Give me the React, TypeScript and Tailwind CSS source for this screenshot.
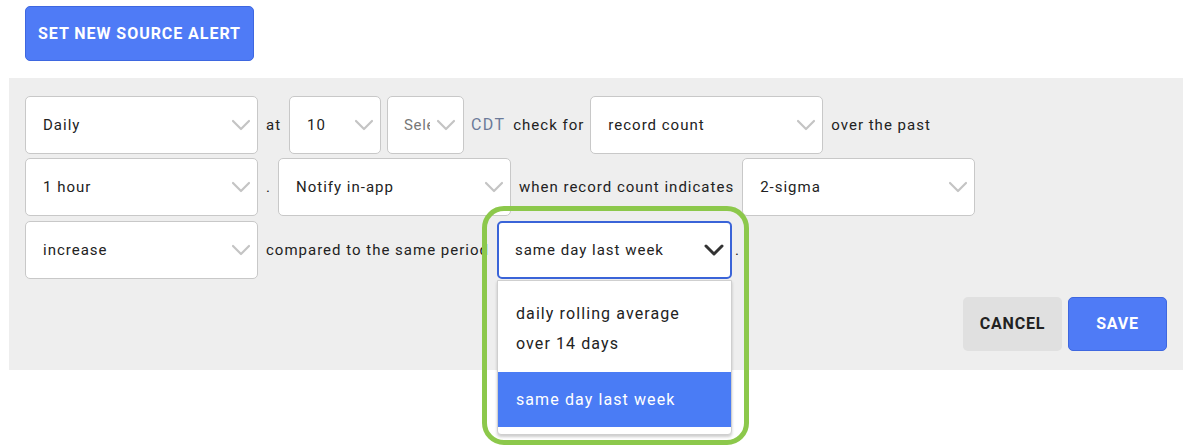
import React from "react";

const Chevron = ({ dark = false }: { dark?: boolean }) => (
  <svg
    width="20"
    height="12"
    viewBox="0 0 20 12"
    fill="none"
    className="shrink-0"
  >
    <path
      d="M2 2 L10 10 L18 2"
      stroke={dark ? "#333333" : "#c4c4c4"}
      strokeWidth={dark ? 3 : 2.2}
      strokeLinecap="round"
      strokeLinejoin="round"
    />
  </svg>
);

const Select = ({
  value,
  width,
  focused = false,
}: {
  value: string;
  width: string;
  focused?: boolean;
}) => (
  <div
    className={`${width} h-[58px] shrink-0 bg-white rounded-[5px] flex items-center justify-between overflow-hidden ${
      focused ? "border-2 border-[#3a64d8] pl-[16px] pr-[6px]" : "border border-[#c8c8c8] pl-[17px] pr-[6px]"
    }`}
  >
    <span className="text-[15px] tracking-[1px] whitespace-nowrap overflow-hidden text-[#222]">{value}</span>
    <Chevron dark={focused} />
  </div>
);

const Label = ({ children, className = "" }: { children: React.ReactNode; className?: string }) => (
  <span className={`text-[15px] tracking-[1px] text-[#222] whitespace-nowrap ${className}`}>{children}</span>
);

export default function App() {
  return (
    <div className="w-[1193px] h-[448px] bg-white relative font-['Roboto',sans-serif] overflow-hidden">
      <div className="pt-[6px] pl-[25px]">
        <button className="w-[229px] h-[55px] rounded-[5px] bg-[#4f7bf6] border border-[#3e67e0] text-white font-bold text-[16px] tracking-[0.95px]">
          SET NEW SOURCE ALERT
        </button>
      </div>

      <div className="mt-[17px] ml-[9px] w-[1174px] h-[292px] bg-[#eeeeee] pt-[18px] pl-[16px] pr-[16px] flex flex-col">
        <div className="flex items-center h-[58px]">
          <Select value="Daily" width="w-[233px]" />
          <Label className="ml-[8px] mr-[8px]">at</Label>
          <Select value="10" width="w-[92px]" />
          <div className="ml-[6px] w-[77px] h-[58px] shrink-0 bg-white rounded-[5px] border border-[#c8c8c8] flex items-center pl-[16px] pr-[5px] overflow-hidden">
            <span className="block shrink-0 text-[15px] tracking-[0.6px] text-[#777] w-[26px] overflow-hidden whitespace-nowrap">Sele</span>
            <span className="ml-[6px] flex">
              <Chevron />
            </span>
          </div>
          <span className="ml-[7px] text-[16px] tracking-[1.3px] text-[#6b7a99]">CDT</span>
          <Label className="ml-[8px] mr-[6px]">check for</Label>
          <Select value="record count" width="w-[233px]" />
          <Label className="ml-[8px]">over the past</Label>
        </div>

        <div className="flex items-center h-[58px] mt-[4px]">
          <Select value="1 hour" width="w-[233px]" />
          <Label className="ml-[8px] mr-[7px]">.</Label>
          <Select value="Notify in-app" width="w-[233px]" />
          <Label className="ml-[8px] mr-[8px]">when record count indicates</Label>
          <Select value="2-sigma" width="w-[233px]" />
        </div>

        <div className="flex items-center h-[58px] mt-[5px]">
          <Select value="increase" width="w-[233px]" />
          <Label className="ml-[8px] mr-[8px]">compared to the same period</Label>
          <div className="relative">
            <Select value="same day last week" width="w-[235px]" focused />
            <div className="absolute left-0 top-[59px] w-[235px] bg-white border border-[#cfcfcf] rounded-b-[4px] shadow-[0_2px_3px_rgba(0,0,0,0.2)] pb-[7px] z-10">
              <div className="pl-[18px] pt-[18px] pb-[13px] text-[16px] leading-[30px] tracking-[1.1px] text-[#222]">
                daily rolling average
                <br />
                over 14 days
              </div>
              <div className="h-[55px] bg-[#4a7cf5] flex items-center pl-[18px] text-[16px] tracking-[1.1px] text-white">
                same day last week
              </div>
            </div>
          </div>
          <Label className="ml-[3px]">.</Label>
        </div>

        <div className="flex justify-end gap-[6px] mt-[18px]">
          <button className="w-[99px] h-[54px] rounded-[5px] bg-[#e0e0e0] text-[#222] font-bold text-[16px] tracking-[0.8px]">
            CANCEL
          </button>
          <button className="w-[99px] h-[54px] rounded-[5px] bg-[#4f7bf6] border border-[#3e67e0] text-white font-bold text-[16px] tracking-[0.8px]">
            SAVE
          </button>
        </div>
      </div>

      <div className="absolute left-[482px] top-[206px] w-[267px] h-[239px] rounded-[22px] border-[5px] border-[#8cc84b] pointer-events-none z-20" />
    </div>
  );
}
